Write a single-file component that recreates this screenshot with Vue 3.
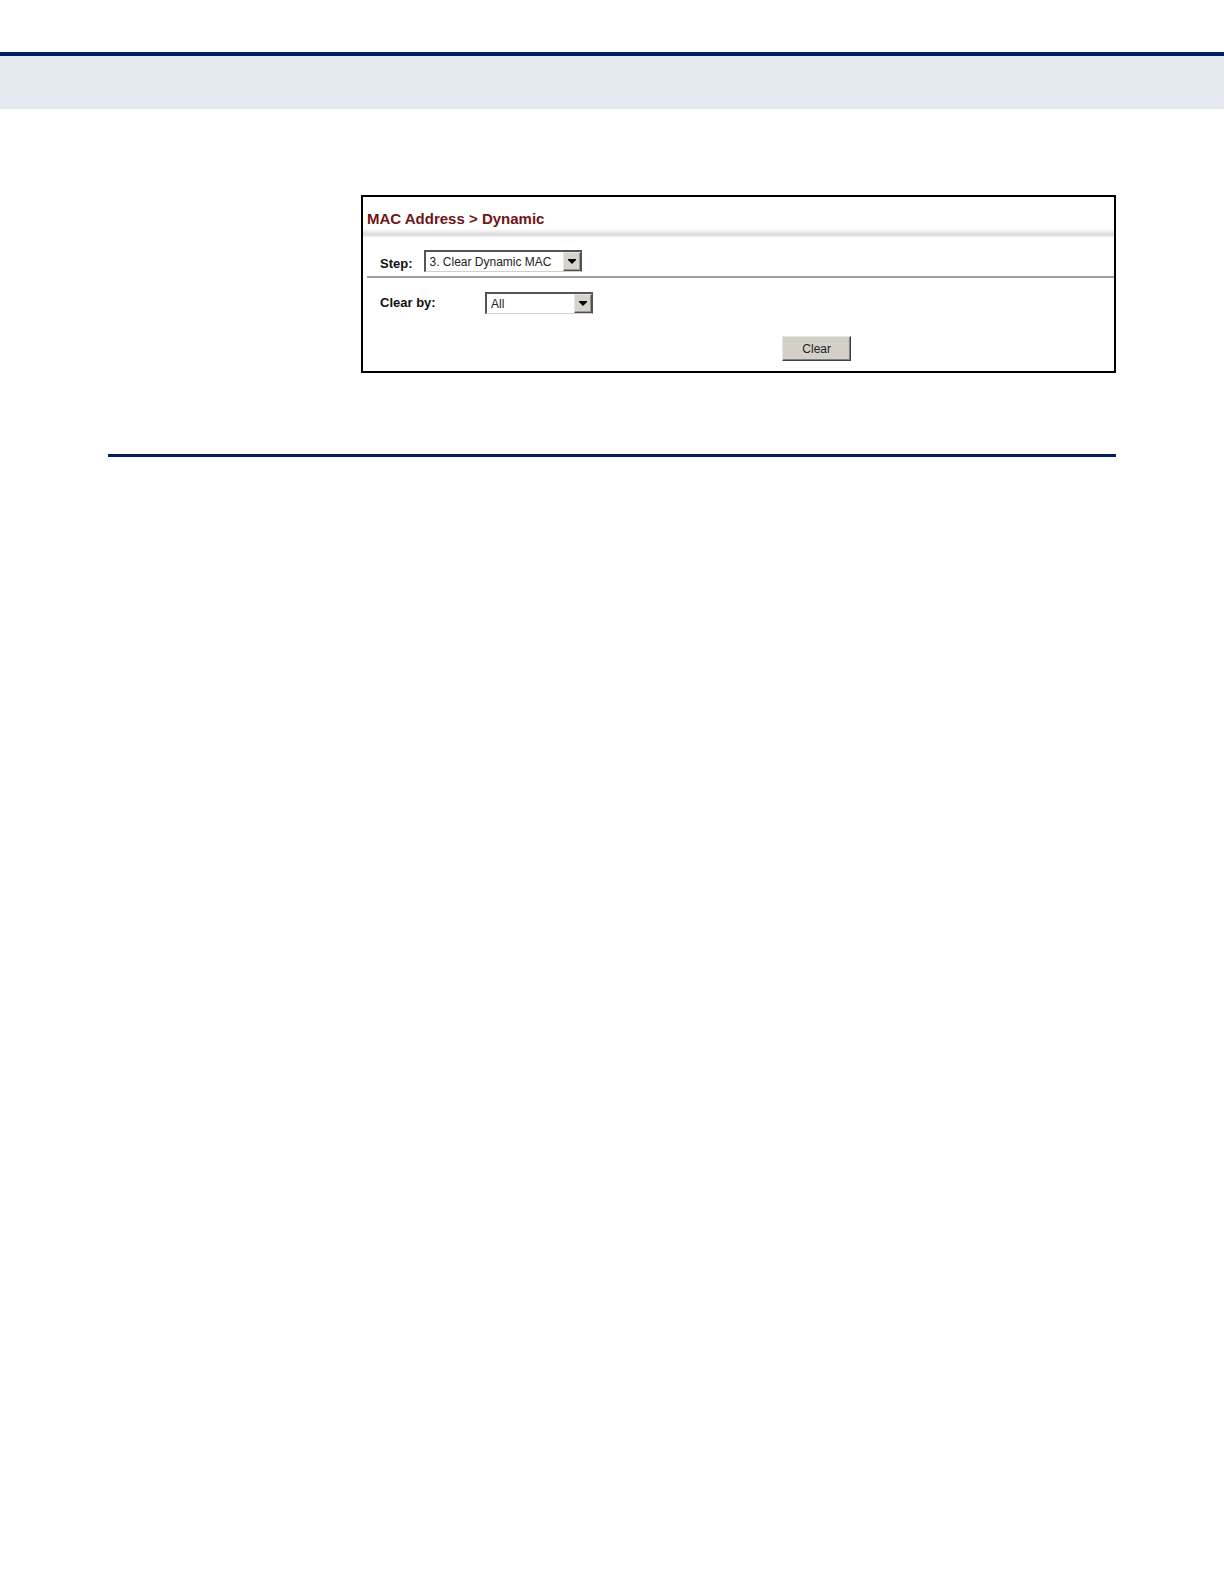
<template>
  <div class="page">
    <header class="page-band"></header>

    <main class="content">
      <section class="panel">
        <h1 class="panel-title">MAC Address &gt; Dynamic</h1>
        <div class="panel-shade"></div>

        <form @submit.prevent="clearTable">
          <div class="row row--step">
            <label for="step">Step:</label>
            <span class="select select--step">
              <select id="step" v-model="step">
                <option v-for="item in steps" :key="item" :value="item">{{ item }}</option>
              </select>
              <span class="select-button" aria-hidden="true">
                <svg width="8" height="5" viewBox="0 0 8 5"><path d="M0 0h8v1L4 5 0 1z" /></svg>
              </span>
            </span>
          </div>

          <div class="row row--clear">
            <label for="clear-by">Clear by:</label>
            <span class="select select--clear">
              <select id="clear-by" v-model="clearBy">
                <option v-for="item in clearOptions" :key="item" :value="item">{{ item }}</option>
              </select>
              <span class="select-button" aria-hidden="true">
                <svg width="8" height="5" viewBox="0 0 8 5"><path d="M0 0h8v1L4 5 0 1z" /></svg>
              </span>
            </span>
          </div>

          <div class="actions">
            <button type="submit" class="clear-button">Clear</button>
          </div>
        </form>
      </section>

      <hr class="section-rule" />
    </main>
  </div>
</template>

<script setup>
import { ref } from 'vue'

const steps = ['3. Clear Dynamic MAC']
const clearOptions = ['All']

const step = ref(steps[0])
const clearBy = ref(clearOptions[0])

const clearTable = () => {
  clearBy.value = clearOptions[0]
}
</script>

<style>
body {
  margin: 0;
  background: #fff;
}
</style>

<style scoped>
.page {
  padding-top: 52px;
  font-family: "Liberation Sans", Arial, sans-serif;
  font-size: 13px;
  line-height: 16px;
  color: #111;
}

.page-band {
  height: 53px;
  border-top: 4px solid #02205f;
  background: #e5e9f0;
}

.content {
  padding: 86px 108px 0;
}

.panel {
  margin-left: 253px;
  padding-bottom: 10px;
  border: 2px solid #000;
}

.panel-title {
  margin: 0;
  padding: 12px 4px 0;
  font-size: 15px;
  line-height: 20px;
  color: #701418;
}

.panel-shade {
  height: 9px;
  background: linear-gradient(#fff, #d8d8d8 60%, #fff);
}

.row {
  display: flex;
  align-items: center;
}

.row label {
  font-weight: bold;
}

.row--step {
  gap: 11px;
  margin-left: 4px;
  padding: 12px 0 4px 13px;
  border-bottom: 2px solid #a0a0a0;
}

.row--step label {
  padding-top: 5px;
}

.row--clear {
  padding: 14px 0 0 17px;
}

.row--clear label {
  width: 105px;
}

.select {
  position: relative;
  display: block;
}

.select--step {
  width: 158px;
}

.select--clear {
  width: 108px;
}

.select select {
  appearance: none;
  display: block;
  width: 100%;
  height: 22px;
  margin: 0;
  padding: 0 20px 0 4px;
  border: 2px solid #555;
  border-right-width: 1px;
  border-bottom: 1px solid #d4d0c8;
  border-radius: 0;
  background: #fff;
  font: inherit;
  font-size: 12px;
  color: #222;
}

.select-button {
  position: absolute;
  top: 2px;
  right: 1px;
  bottom: 1px;
  display: flex;
  align-items: center;
  justify-content: center;
  box-sizing: border-box;
  width: 18px;
  border: 1px solid;
  border-color: #e8e6e0 #505050 #505050 #e8e6e0;
  background: #d6d3cc;
  box-shadow: inset -1px -1px #999;
  pointer-events: none;
}

.actions {
  display: flex;
  justify-content: flex-end;
  margin-top: 22px;
  padding-right: 35%;
}

.clear-button {
  width: 69px;
  height: 25px;
  padding: 0;
  border: 1px solid;
  border-color: #e8e6e0 #404040 #404040 #e8e6e0;
  border-radius: 0;
  background: #d3d0c8;
  box-shadow: inset -1px -1px #808080;
  font: inherit;
  font-size: 12px;
  color: #222;
}

.section-rule {
  height: 3px;
  margin: 81px 0 0;
  border: 0;
  background: #02205f;
}
</style>
